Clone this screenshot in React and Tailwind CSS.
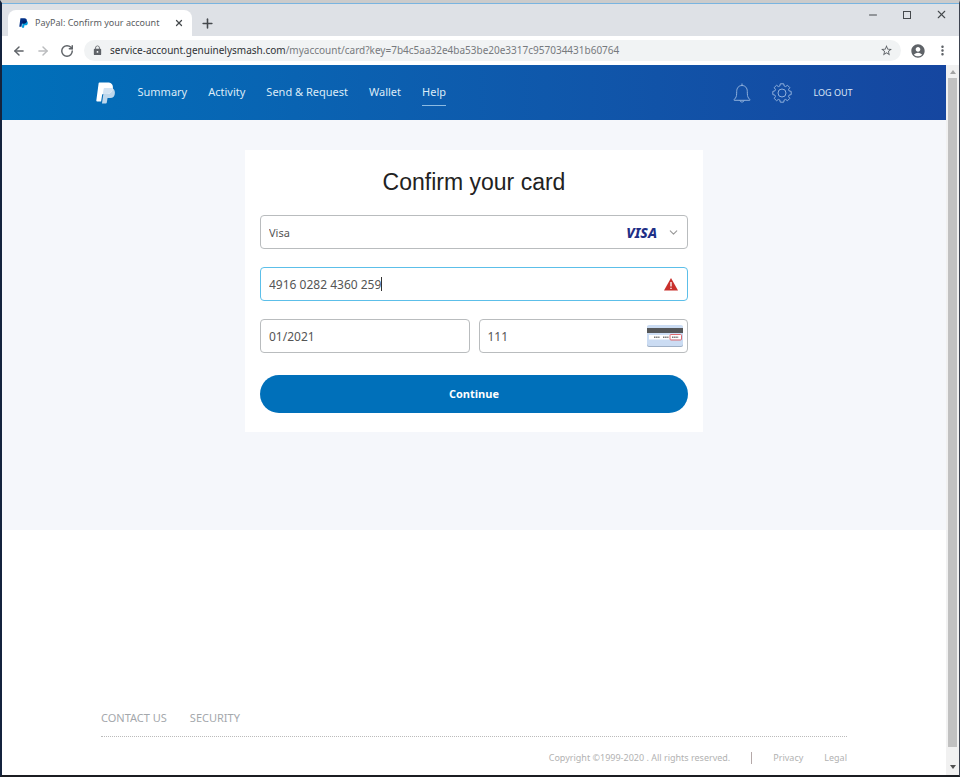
import { ArrowLeft, ArrowRight, ChevronDown, Minus, Plus, RotateCw, X } from 'lucide-react';
import { MdAccountCircle, MdLock, MdMoreVert, MdStarBorder } from 'react-icons/md';

const NAV_ITEMS = [
    { label: 'Summary' },
    { label: 'Activity' },
    { label: 'Send & Request' },
    { label: 'Wallet' },
    { label: 'Help', active: true },
];

const FIELD = 'h-[34px] w-full rounded border bg-white pl-2 text-[#555] outline-none';

function PayPalMark({ className, back, middle, front }) {
    return (
        <svg viewBox="0 0 24 28" className={className} aria-hidden="true">
            <path fill={front} d="M7.5 27.5h5c.6 0 1-.4 1.1-1l1-6h3.2c4 0 6.2-2.2 6.2-6.8 0-2.3-.9-4.300-2.600-5.400L10 10z" />
            <path fill={back} d="M4.300.5h10.200c4.700 0 7.500 2.400 6.900 7.300-.7 5.200-4.100 7.600-8.800 7.600H8.900c-.7 0-1.100.4-1.200 1l-1.300 8.300H1.100c-.6 0-.9-.4-.8-1L3.300 1.400c.1-.6.4-.9 1-.9z" />
            <path fill={middle} d="M9.600 8.800c.1-.7.600-1.100 1.200-1.100h6.700c1.500 0 2.800.2 3.900.6-.9 4.900-4.200 7.100-8.800 7.100H8.900l-.4.200z" />
        </svg>
    );
}

function WarningIcon() {
    return (
        <svg viewBox="0 0 14 13" className="h-[13px] w-[14px]" aria-hidden="true">
            <path fill="#c9302c" d="M7 0 14 12.600H0z" />
            <path stroke="#fff" strokeWidth="1.300" d="M7 4v4.500M7 9.700V11" />
        </svg>
    );
}

function CardBackIcon() {
    return (
        <svg viewBox="0 0 36 22" className="h-[22px] w-9" aria-hidden="true">
            <rect x="0" y="1" width="36" height="21" rx="2" fill="#9fb0c6" />
            <rect x="0" y="0" width="36" height="21" rx="2" fill="#cbdcf3" />
            <path fill="#555759" d="M0 3h36v5H0z" />
            <path fill="#fff" d="M2 10h32v4.500H2z" />
            <path stroke="#777" strokeWidth="1.500" strokeDasharray="1.500 .6" d="M7 12.300h5.500M16 12.300h5.500M25 12.300h6.500" />
            <rect x="23" y="9.500" width="11.500" height="5.500" rx="1" fill="none" stroke="#de6b70" />
        </svg>
    );
}

function BellIcon() {
    return (
        <svg viewBox="0 0 18 20" className="h-5 w-[18px]" fill="none" stroke="currentColor" aria-hidden="true">
            <path d="M9 .5v2M2.500 15c1-1.500 1.200-3 1.200-6.500 0-3.500 2-6 5.300-6s5.300 2.500 5.300 6c0 3.500.2 5 1.200 6.500l1.300 1.500v.8H1.200v-.8zM6.800 17.300c.3 1.200 1 1.700 2.200 1.700s1.900-.5 2.200-1.700" />
        </svg>
    );
}

function GearIcon() {
    return (
        <svg viewBox="0 0 20 20" className="h-5 w-5" fill="none" stroke="currentColor" strokeLinejoin="round" aria-hidden="true">
            <path d="M8.300.8h3.400l.5 2.200 1.300.6 2-1.300 2.300 2.300-1.300 2 .6 1.300 2.100.5v3.200l-2.100.5-.6 1.300 1.300 2-2.300 2.300-2-1.300-1.300.6-.5 2.200H8.300L7.800 17l-1.300-.6-2 1.300-2.300-2.300 1.300-2-.6-1.300-2.100-.5V8.400l2.100-.5.6-1.300-1.300-2 2.300-2.300 2 1.300L7.800 3z" />
            <circle cx="10" cy="10" r="4" />
        </svg>
    );
}

function TabStrip() {
    return (
        <div className="flex h-8 items-start bg-[#dee1e6] pl-1.5">
            <div className="mt-1.5 flex h-[26px] w-[184px] items-center rounded-t-lg bg-white pr-2 pl-[11px]">
                <PayPalMark className="h-[10px] w-[9px] shrink-0" back="#003087" middle="#012169" front="#009cde" />
                <span className="ml-[7px] flex-1 whitespace-nowrap text-[9px] text-[#5a5d61]">PayPal: Confirm your account</span>
                <button type="button" aria-label="Close tab" className="text-[#45494d]">
                    <X size={10} strokeWidth={3} />
                </button>
            </div>
            <button type="button" aria-label="New tab" className="mt-3 ml-2 text-[#45494d]">
                <Plus size={15} strokeWidth={2.5} />
            </button>
            <div className="ml-auto flex items-center gap-6 pt-1 pr-[11px] text-[#45494d]">
                <button type="button" aria-label="Minimize"><Minus size={12} /></button>
                <button type="button" aria-label="Maximize" className="size-2 border border-[#45494d]" />
                <button type="button" aria-label="Close"><X size={13} /></button>
            </div>
        </div>
    );
}

function AddressBar() {
    return (
        <div className="flex h-[29px] items-center bg-white pr-[9px] pl-2.5 text-[#5f6368]">
            <button type="button" aria-label="Back"><ArrowLeft size={14} strokeWidth={2.5} /></button>
            <button type="button" aria-label="Forward" className="ml-2.5 text-[#babcbe]"><ArrowRight size={14} strokeWidth={2.5} /></button>
            <button type="button" aria-label="Reload" className="ml-2.5"><RotateCw size={14} strokeWidth={2.5} /></button>
            <div className="ml-2.5 flex h-[21px] flex-1 items-center rounded-full bg-[#f1f3f4] pr-2 pl-2">
                <MdLock size={11} />
                <span className="ml-[7px] text-[10px] whitespace-nowrap text-[#777a7e]">
                    <span className="text-[#2f3236]">service-account.genuinelysmash.com</span>
                    /myaccount/card?key=7b4c5aa32e4ba53be20e3317c957034431b60764
                </span>
                <button type="button" aria-label="Bookmark" className="ml-auto"><MdStarBorder size={13} /></button>
            </div>
            <MdAccountCircle size={16} className="ml-[9px]" />
            <button type="button" aria-label="Menu" className="ml-[9px]"><MdMoreVert size={15} /></button>
        </div>
    );
}

function SiteHeader() {
    return (
        <header className="bg-linear-to-r from-[#0070ba] to-[#1546a0]">
            <div className="mx-auto flex h-[55px] w-full max-w-[757px] items-center">
                <PayPalMark className="h-[22px] w-[19px]" back="#fff" middle="#d3e3f2" front="#bed7ec" />
                <nav className="ml-[23px] flex gap-[21px] text-[11px] text-[#dcebf7]">
                    {NAV_ITEMS.map((item) => (
                        <a
                            key={item.label}
                            href="#"
                            className={`border-b pb-1 leading-[18px] ${item.active ? 'border-[#8dbbe2]' : 'border-transparent'}`}
                        >
                            <span className="block pt-1">{item.label}</span>
                        </a>
                    ))}
                </nav>
                <div className="ml-auto flex items-center text-[#8fb0dc]">
                    <button type="button" aria-label="Notifications"><BellIcon /></button>
                    <button type="button" aria-label="Settings" className="ml-[21px]"><GearIcon /></button>
                    <a href="#" className="ml-[21px] text-[9px] text-[#dce7f6]">LOG OUT</a>
                </div>
            </div>
        </header>
    );
}

function CardForm() {
    return (
        <section className="mx-auto w-full max-w-[458px] bg-white px-[15px] pt-4 pb-[19px]">
            <h1 className="text-center font-['Liberation_Sans',Arial,sans-serif] text-[23px] leading-8 text-[#222]">Confirm your card</h1>
            <div className="relative mt-[17px]">
                <select aria-label="Card type" defaultValue="Visa" className={`${FIELD} appearance-none border-[#b9bcbe] pt-0.5 text-[11px]`}>
                    <option>Visa</option>
                </select>
                <div className="pointer-events-none absolute inset-y-0 right-2 flex items-center gap-2.5">
                    <span className="text-[14px] font-extrabold text-[#1f2f86] italic">VISA</span>
                    <ChevronDown size={13} strokeWidth={2} className="text-[#999]" />
                </div>
            </div>
            <div className="relative mt-[18px]">
                <input aria-label="Card number" readOnly value="4916 0282 4360 259" className={`${FIELD} border-[#5cbfe9] text-[12px]`} />
                {/* sizer keeps the caret right behind the number */}
                <div className="pointer-events-none absolute inset-y-0 left-[9px] flex items-center text-[12px]">
                    <span className="invisible">4916 0282 4360 259</span>
                    <span className="h-[14px] w-px bg-[#333]" />
                </div>
                <div className="pointer-events-none absolute inset-y-0 right-[10px] flex items-center"><WarningIcon /></div>
            </div>
            <div className="mt-[18px] grid grid-cols-2 gap-[9px]">
                <input aria-label="Expiration date" readOnly value="01/2021" className={`${FIELD} border-[#b9bcbe] text-[12px]`} />
                <div className="relative">
                    <input aria-label="Security code" readOnly value="111" className={`${FIELD} border-[#b9bcbe] text-[12px]`} />
                    <div className="pointer-events-none absolute inset-y-0 right-[5px] flex items-center"><CardBackIcon /></div>
                </div>
            </div>
            <button type="button" className="mt-[22px] h-[38px] w-full rounded-full bg-[#0070ba] font-['Open_Sans','Noto_Sans',sans-serif] text-[11px] font-bold text-white">
                Continue
            </button>
        </section>
    );
}

function SiteFooter() {
    return (
        <footer className="mx-auto mt-auto w-full max-w-[746px] pb-[9px] text-[#a4a8ac]">
            <div className="flex gap-[23px] border-b border-dotted border-[#bbb] pb-2.5 text-[11px] leading-4">
                <a href="#">CONTACT US</a>
                <a href="#">SECURITY</a>
            </div>
            <div className="flex items-center justify-end pt-[13px] text-[9px] leading-4 text-[#b2b2b2]">
                <span>Copyright ©1999-2020 . All rights reserved.</span>
                <span className="mx-[21px] h-3 w-px bg-[#b5a9a9]" />
                <a href="#">Privacy</a>
                <a href="#" className="ml-[21px]">Legal</a>
            </div>
        </footer>
    );
}

function Scrollbar() {
    return (
        <div className="flex w-[13px] shrink-0 flex-col items-center bg-[#f1f1f1]" aria-hidden="true">
            <div className="flex h-[13px] items-center">
                <svg viewBox="0 0 6 4" className="h-1 w-1.5"><path fill="#a3a3a3" d="M3 0 6 4H0z" /></svg>
            </div>
            <div className="w-[9px] flex-1 bg-[#c1c1c1]" />
            <div className="flex h-7 items-end pb-1.5">
                <svg viewBox="0 0 6 4" className="h-1 w-1.5"><path fill="#505050" d="M0 0h6L3 4z" /></svg>
            </div>
        </div>
    );
}

export default function App() {
    return (
        <div className="flex min-h-screen flex-col border-t-[3px] border-r border-b-2 border-l-2 border-t-[#cbcbcb] border-r-[#3d4350] border-b-[#1b1d22] border-l-[#14233d] font-['Noto_Sans','Open_Sans',sans-serif]">
            <div className="h-px bg-[#79b4e0]" />
            <TabStrip />
            <AddressBar />
            <div className="flex flex-1">
                <div className="flex min-w-0 flex-1 flex-col bg-white">
                    <SiteHeader />
                    <main className="bg-[#f5f7fb] pt-[30px] pb-[98px]">
                        <CardForm />
                    </main>
                    <SiteFooter />
                </div>
                <Scrollbar />
            </div>
        </div>
    );
}
